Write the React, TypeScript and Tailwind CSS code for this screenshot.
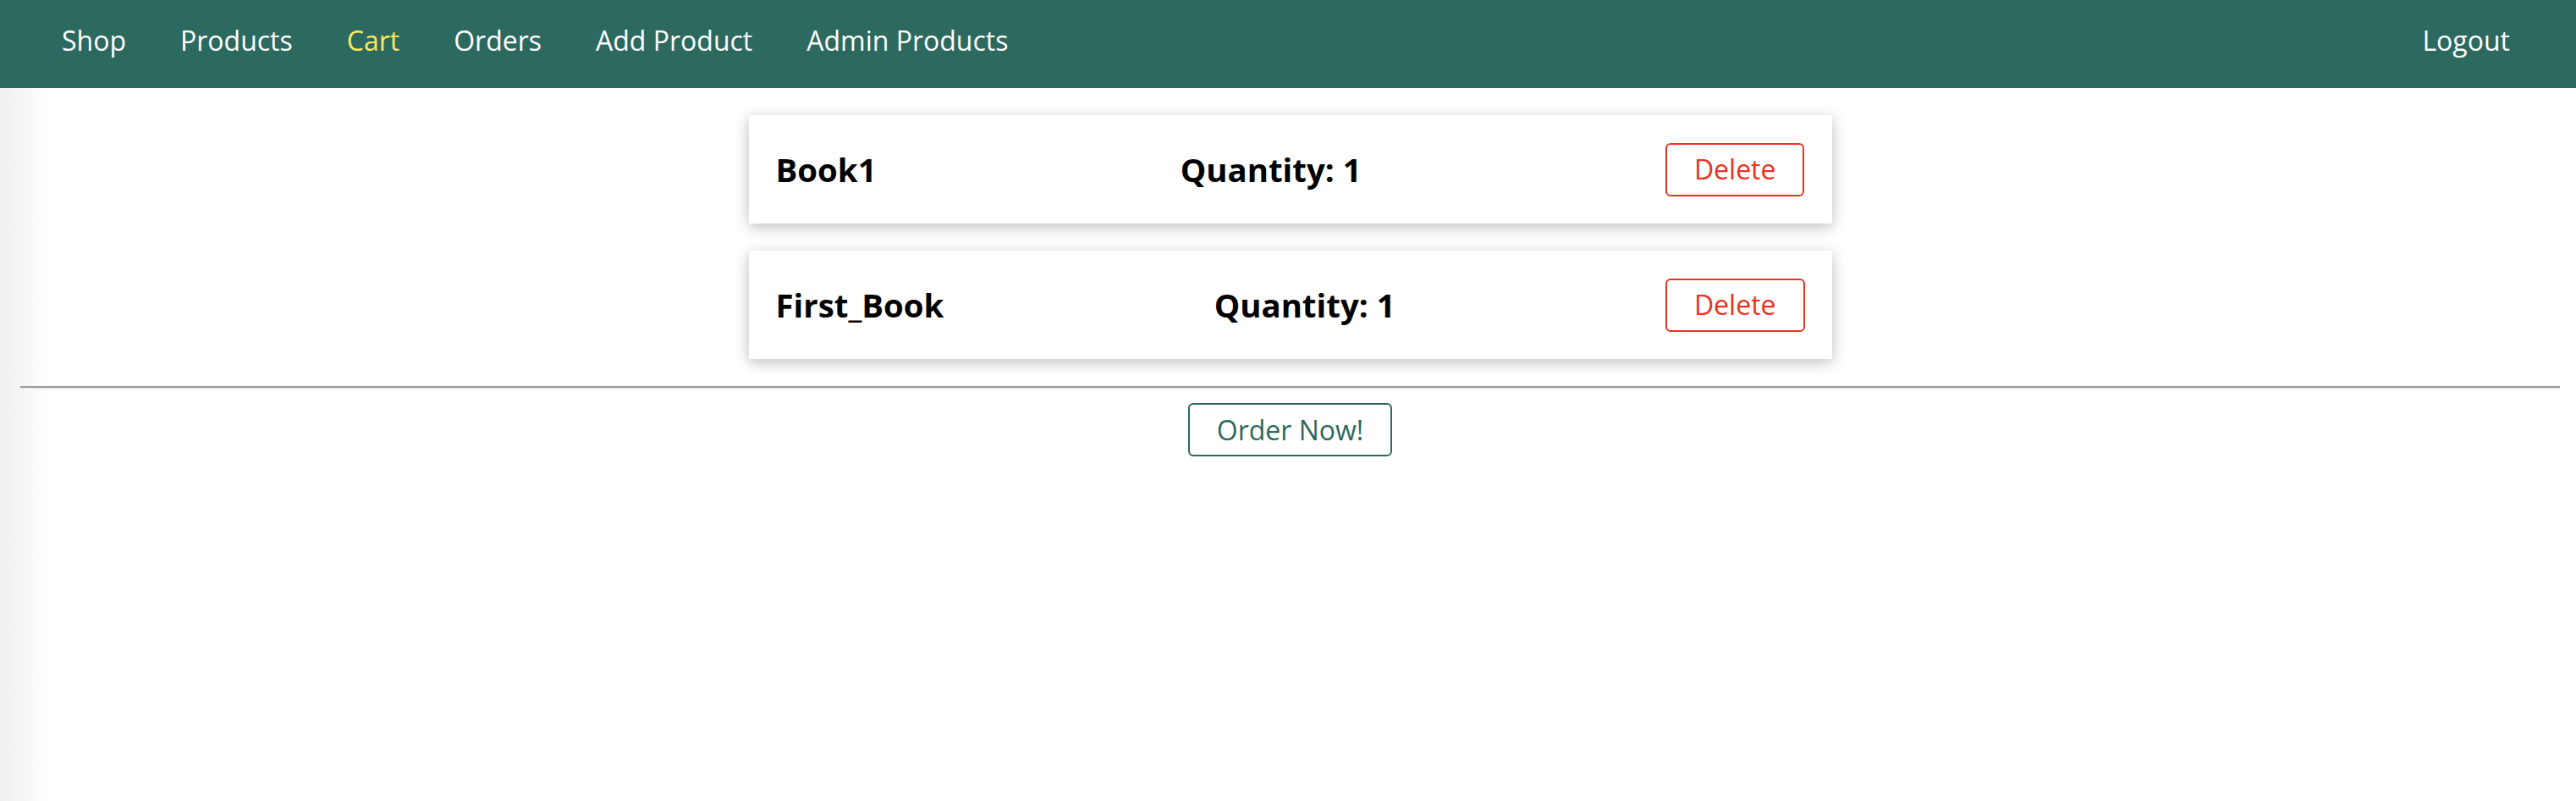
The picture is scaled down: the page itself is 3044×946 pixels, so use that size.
import React from "react";

const navItems = [
  { label: "Shop", active: false },
  { label: "Products", active: false },
  { label: "Cart", active: true },
  { label: "Orders", active: false },
  { label: "Add Product", active: false },
  { label: "Admin Products", active: false },
];

const cartItems = [
  { title: "Book1", qty: 1 },
  { title: "First_Book", qty: 1 },
];

export default function App() {
  return (
    <div className="min-h-screen flex flex-col font-['Open_Sans',sans-serif]">
      <header className="h-[104px] w-full bg-[#2c695e] flex items-center justify-between pl-[73px] pr-[78px] pb-[8px]">
        <nav>
          <ul className="flex items-center gap-[64px]">
            {navItems.map((item) => (
              <li key={item.label}>
                <a
                  className={
                    item.active
                      ? "text-[32px] leading-normal text-[#fdea5b]"
                      : "text-[32px] leading-normal text-white"
                  }
                >
                  {item.label}
                </a>
              </li>
            ))}
          </ul>
        </nav>
        <nav>
          <ul className="flex items-center">
            <li>
              <a className="text-[32px] leading-normal text-white">Logout</a>
            </li>
          </ul>
        </nav>
      </header>
      <main className="flex-1 bg-[linear-gradient(to_right,#efefef_0px,#ffffff_60px)] pl-[24px] pr-[19px] pt-[32px]">
        <ul className="w-[1280px] mx-auto flex flex-col gap-[32px]">
          {cartItems.map((c) => (
            <li
              key={c.title}
              className="h-[128px] bg-white px-[32px] flex items-center justify-between shadow-[0_4px_16px_rgba(0,0,0,0.26)]"
            >
              <h2 className="text-[38.4px] font-bold leading-normal text-black pt-[2px]">{c.title}</h2>
              <h2 className="text-[38.4px] font-bold leading-normal text-black pt-[2px]">Quantity: {c.qty}</h2>
              <button className="h-[63px] flex items-center justify-center border-2 border-[#ea3323] text-[#ea3323] rounded-[6px] px-[32px] text-[32px] leading-none bg-white">
                Delete
              </button>
            </li>
          ))}
        </ul>
        <hr className="mt-[32px] border-0 border-t-2 border-t-[#9a9a9a] border-b-2 border-b-[#eeeeee]" />
        <div className="flex justify-center mt-[16px]">
          <button className="h-[63px] flex items-center justify-center border-2 border-[#2c695e] text-[#2c695e] rounded-[6px] px-[32px] text-[32px] leading-none bg-white">
            Order Now!
          </button>
        </div>
      </main>
    </div>
  );
}
